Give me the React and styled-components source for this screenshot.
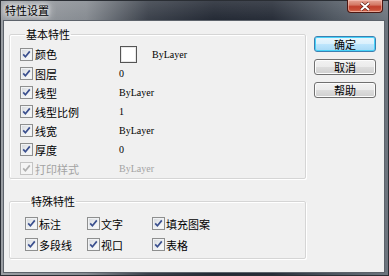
import React from "react";
import styled, { createGlobalStyle, css } from "styled-components";

const Global = createGlobalStyle`
  html, body { margin: 0; padding: 0; background: #3a3f47; }
  body { width: 389px; height: 276px; overflow: hidden; }
`;

const CJK = `"Noto Sans CJK SC", "Noto Sans", sans-serif`;

const Window = styled.div`
  width: 389px;
  height: 276px;
  box-sizing: border-box;
  display: flex;
  flex-direction: column;
  background:
    linear-gradient(180deg, rgba(255,255,255,0.12) 0px, rgba(255,255,255,0) 20px),
    linear-gradient(90deg, #9a9ea3 0%, #868b91 22%, #3a404a 38%, #232934 55%, #262c37 70%, #4e5660 86%, #6d757e 100%);
  border: 1px solid #2a2e34;
`;

const TitleBar = styled.div`
  height: 19px;
  display: flex;
  justify-content: space-between;
  align-items: flex-start;
  padding-left: 2px;
`;

const Title = styled.span`
  font-family: ${CJK};
  font-size: 11px;
  line-height: 16px;
  color: #000;
  margin-top: 1px;
  padding: 0 2px;
  text-shadow: 0 0 4px #fff, 0 0 8px rgba(255,255,255,0.9), 0 0 10px rgba(255,255,255,0.8);
`;

const CloseButton = styled.div`
  width: 36px;
  height: 13px;
  margin-top: -1px;
  margin-right: 5px;
  box-sizing: border-box;
  border: 1px solid #4c1812;
  border-top: none;
  border-radius: 0 0 4px 4px;
  background: linear-gradient(180deg, #e5a597 0%, #d57a66 40%, #c1402d 55%, #c9523a 85%, #dd8a6f 100%);
  box-shadow: inset 0 0 0 1px rgba(255,210,200,0.5);
  display: flex;
  align-items: center;
  justify-content: center;
`;

const Client = styled.div`
  flex: 1;
  margin: 0 3px 2px 2px;
  background: #f0f0f0;
  border: 1px solid #5d636b;
  display: flex;
  gap: 8px;
  padding: 6px 0 0 5px;
`;

const LeftCol = styled.div`
  width: 297px;
  display: flex;
  flex-direction: column;
  gap: 15px;
`;

const Group = styled.fieldset`
  margin: 0;
  box-sizing: border-box;
  width: 297px;
  border: 1px solid #d5d5d5;
  border-radius: 2px;
  box-shadow: inset 1px 1px 0 #fff, 1px 1px 0 #fff;
  padding: ${(p) => p.$pad};
  min-width: 0;
`;

const Legend = styled.legend`
  font-family: ${CJK};
  font-size: 11px;
  line-height: 14px;
  color: #000;
  padding: 0 1px;
  margin-left: 5px;
`;

const Row = styled.div`
  height: ${(p) => p.$h || 19}px;
  display: flex;
  align-items: center;
`;

const CheckLabel = styled.label`
  width: 99px;
  display: flex;
  align-items: center;
  gap: 2px;
  font-family: ${CJK};
  font-size: 11px;
  color: ${(p) => (p.$disabled ? "#a3a3a3" : "#000")};
`;

const Box = styled.span`
  width: 13px;
  height: 13px;
  box-sizing: border-box;
  border: 1px solid ${(p) => (p.$disabled ? "#c4c4c4" : "#8e8f8f")};
  background: ${(p) =>
    p.$disabled
      ? "#f4f4f4"
      : "linear-gradient(135deg, #d3d6da 0%, #eef0f2 55%, #fbfbfb 100%)"};
  box-shadow: inset 0 0 0 1px ${(p) => (p.$disabled ? "#f4f4f4" : "#f0f2f4")};
  display: flex;
  align-items: center;
  justify-content: center;
  flex: none;
`;

const Value = styled.span`
  font-family: "Liberation Serif", "Times New Roman", serif;
  font-size: 10px;
  color: ${(p) => (p.$disabled ? "#a3a3a3" : "#000")};
  ${(p) =>
    p.$offset &&
    css`
      margin-left: ${p.$offset}px;
    `}
`;

const Swatch = styled.span`
  width: 17px;
  height: 17px;
  box-sizing: border-box;
  border: 1px solid #555;
  background: #fff;
  box-shadow: inset 0 0 0 1px #e8e8e8;
`;

const ColorValue = styled.div`
  display: flex;
  align-items: center;
  margin-left: 1px;
`;

const SpecialGrid = styled.div`
  display: grid;
  grid-template-columns: 62px 65px auto;
  grid-auto-rows: 21px;
  align-items: center;
`;

const SpecialItem = styled.label`
  display: flex;
  align-items: center;
  gap: 1px;
  font-family: ${CJK};
  font-size: 11px;
  color: #000;
`;

const RightCol = styled.div`
  display: flex;
  flex-direction: column;
  gap: 7px;
  padding-top: 9px;
`;

const Button = styled.button`
  width: 62px;
  height: 16px;
  box-sizing: border-box;
  padding: 0;
  font-family: ${CJK};
  font-size: 11px;
  line-height: 14px;
  color: #000;
  border-radius: 3px;
  border: 1px solid ${(p) => (p.$default ? "#3c7fb1" : "#707070")};
  background: ${(p) =>
    p.$default
      ? "linear-gradient(180deg, #eaf6fd 0%, #d9f0fc 50%, #bee6fd 51%, #a7d9f5 100%)"
      : "linear-gradient(180deg, #f2f2f2 0%, #ebebeb 50%, #dddddd 51%, #cfcfcf 100%)"};
  box-shadow: inset 0 0 0 1px ${(p) => (p.$default ? "#48d3f9" : "#fcfcfc")};
`;

const Check = ({ disabled }) => (
  <svg width="9" height="9" viewBox="0 0 9 9">
    <path
      d="M1.2 4.4 L3.4 6.8 L7.8 1.4"
      fill="none"
      stroke={disabled ? "#b0b0b0" : "#3a4f8e"}
      strokeWidth="1.7"
    />
  </svg>
);

const basic = [
  { label: "图层", value: "0" },
  { label: "线型", value: "ByLayer" },
  { label: "线型比例", value: "1" },
  { label: "线宽", value: "ByLayer" },
  { label: "厚度", value: "0" },
  { label: "打印样式", value: "ByLayer", disabled: true },
];

const special = ["标注", "文字", "填充图案", "多段线", "视口", "表格"];

export default function App() {
  return (
    <>
      <Global />
      <Window>
        <TitleBar>
          <Title>特性设置</Title>
          <CloseButton>
            <svg width="12" height="9" viewBox="0 0 12 9">
              <path d="M2 1 L10 8 M10 1 L2 8" stroke="#5a1a10" strokeWidth="3.2" />
              <path d="M2 1 L10 8 M10 1 L2 8" stroke="#fff" strokeWidth="2" />
            </svg>
          </CloseButton>
        </TitleBar>
        <Client>
          <LeftCol>
            <Group $pad="3px 0 0 10px">
              <Legend>基本特性</Legend>
              <Row $h={20}>
                <CheckLabel>
                  <Box><Check /></Box>颜色
                </CheckLabel>
                <ColorValue>
                  <Swatch />
                  <Value $offset={15}>ByLayer</Value>
                </ColorValue>
              </Row>
              {basic.map((r) => (
                <Row key={r.label}>
                  <CheckLabel $disabled={r.disabled}>
                    <Box $disabled={r.disabled}><Check disabled={r.disabled} /></Box>
                    {r.label}
                  </CheckLabel>
                  <Value $disabled={r.disabled}>{r.value}</Value>
                </Row>
              ))}
            </Group>
            <Group $pad="5px 0 3px 15px">
              <Legend>特殊特性</Legend>
              <SpecialGrid>
                {special.map((s) => (
                  <SpecialItem key={s}>
                    <Box><Check /></Box>
                    {s}
                  </SpecialItem>
                ))}
              </SpecialGrid>
            </Group>
          </LeftCol>
          <RightCol>
            <Button $default>确定</Button>
            <Button>取消</Button>
            <Button>帮助</Button>
          </RightCol>
        </Client>
      </Window>
    </>
  );
}
